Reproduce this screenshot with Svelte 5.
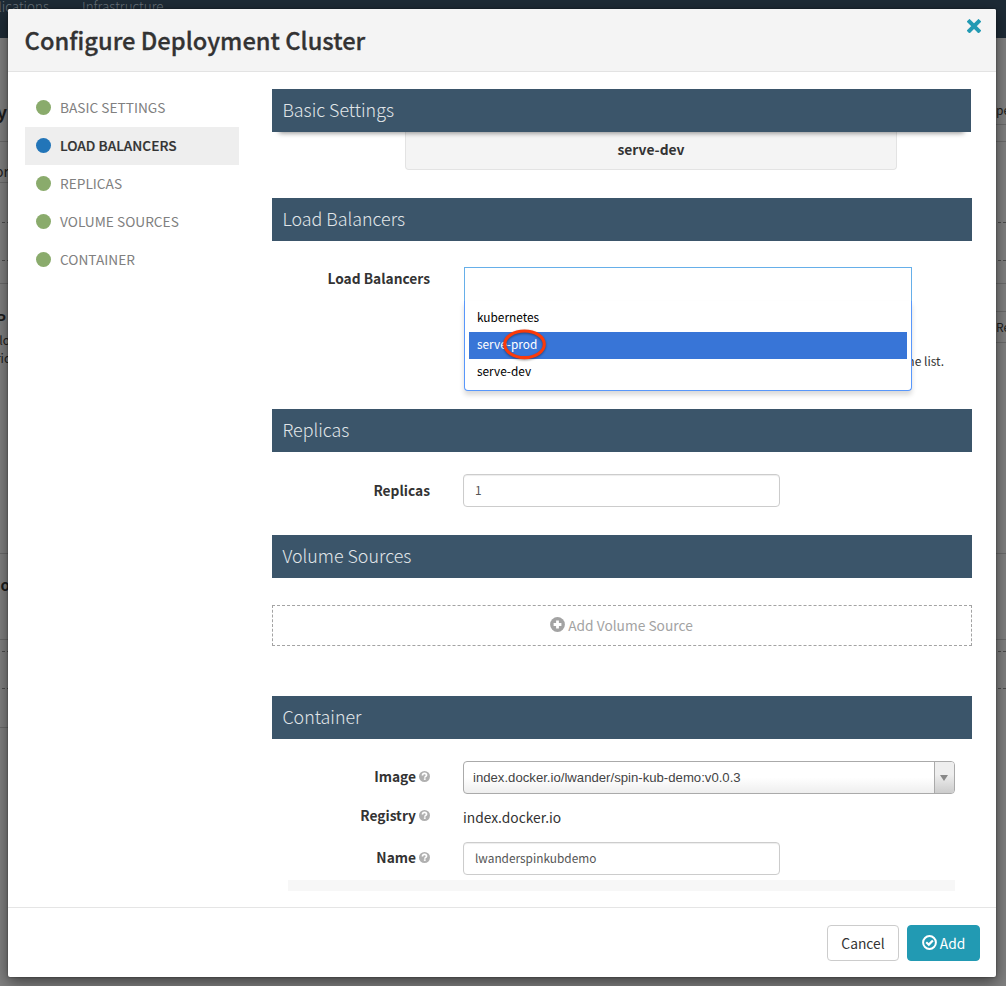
<script>
  const nav = ['Basic Settings', 'Load Balancers', 'Replicas', 'Volume Sources', 'Container'];
  const active = 'Load Balancers';
  const options = ['kubernetes', 'serve-prod', 'serve-dev'];

  // Slices of the dimmed page: height, rule below, text and its look
  const left = [
    { h: 60 }, { h: 44, t: 'y', k: 'big', line: 'solid' }, { h: 41, t: 'or', k: 'mid', line: 'solid' },
    { h: 40, line: 'dashed' }, { h: 38, line: 'dashed' }, { h: 23, line: 'solid' },
    { h: 43, t: 'P', k: 'bold' }, { h: 21, t: 'lo', k: 'small' }, { h: 18, t: 'ric', k: 'small' },
    { h: 188, line: 'solid' }, { h: 86, t: 'o', k: 'bold', line: 'solid' }, { h: 12, line: 'dashed' },
    { h: 37, line: 'dashed' }, { h: 39, line: 'solid' }
  ];
  const right = [
    { h: 60 }, { h: 27, t: 'pe', k: 'cut', line: 'solid' }, { h: 17, line: 'solid' }, { h: 81, line: 'dashed' },
    { h: 38, line: 'dashed' }, { h: 23, line: 'solid' }, { h: 28, line: 'solid' },
    { h: 31, t: 'Re', k: 'small', line: 'solid' }, { h: 211, line: 'solid' }, { h: 86, line: 'solid' },
    { h: 12, line: 'dashed' }, { h: 37, line: 'dashed' }
  ];
</script>

{#snippet help()}
  <svg class="help" viewBox="0 0 14 14" width="11" height="11">
    <circle cx="7" cy="7" r="7" fill="#b0b0b0" />
    <path d="M4.4 5.6C4.4 4 5.4 3 7 3s2.6.9 2.6 2.3c0 1.6-2.2 1.5-2.2 3.2" fill="none" stroke="#fff" stroke-width="2.1" />
    <rect x="6.2" y="9.3" width="2.3" height="2" fill="#fff" />
  </svg>
{/snippet}

<div class="page">
  <div class="topbar"><span>Applications</span><span>Infrastructure</span></div>
  <div class="behind">
    {#each [left, right] as side, i}
      <div class="strip" class:end={i === 1}>
        {#each side as s}
          <div class="slice {s.k ?? ''} {s.line ?? ''}" style="height:{s.h}px">{s.t ?? ''}</div>
        {/each}
      </div>
    {/each}
  </div>

  <div class="modal">
    <header>
      <h1>Configure Deployment Cluster</h1>
      <svg class="close" viewBox="0 0 14 14" width="14" height="14">
        <path d="M2.5 2.7 L11.5 11.7 M11.5 2.7 L2.5 11.7" stroke="#229ab3" stroke-width="4" stroke-linecap="square" stroke-linejoin="round" />
      </svg>
    </header>

    <div class="body">
      <nav>
        {#each nav as item}
          <div class="item" class:active={item === active}><i></i><span>{item}</span></div>
        {/each}
      </nav>

      <main>
        <section class="basic">
          <h2 class="stuck">Basic Settings</h2>
          <div class="well">serve-dev</div>
        </section>

        <section class="lb">
          <h2>Load Balancers</h2>
          <div class="row">
            <div class="label">Load Balancers</div>
            <div class="picker">
              <div class="hint">Refresh the list.</div>
              <div class="menu">
                <div class="search"></div>
                <div class="list">
                  {#each options as o}
                    <div class="option" class:on={o === 'serve-prod'}>{o}</div>
                  {/each}
                </div>
              </div>
              <svg class="mark" width="50" height="38" viewBox="0 0 50 38">
                <ellipse cx="25.5" cy="18.3" rx="19.8" ry="13.3" fill="none" stroke="#fb3a0a" stroke-width="3.1" />
              </svg>
            </div>
          </div>
        </section>

        <section class="replicas">
          <h2>Replicas</h2>
          <div class="row">
            <div class="label">Replicas</div>
            <div class="input">1</div>
          </div>
        </section>

        <section class="volumes">
          <h2>Volume Sources</h2>
          <div class="add">
            <svg viewBox="0 0 15 15" width="15" height="15">
              <circle cx="7.5" cy="7.5" r="7.4" fill="#a3a3a3" />
              <path d="M7.5 3.6v7.8M3.6 7.5h7.8" stroke="#fff" stroke-width="2.8" />
            </svg>
            <span>Add Volume Source</span>
          </div>
        </section>

        <section class="container">
          <h2>Container</h2>
          <div class="row image">
            <div class="label">Image{@render help()}</div>
            <div class="select">
              <span>index.docker.io/lwander/spin-kub-demo:v0.0.3</span>
              <div class="arrow"><b></b></div>
            </div>
          </div>
          <div class="row registry">
            <div class="label">Registry{@render help()}</div>
            <div class="static">index.docker.io</div>
          </div>
          <div class="row name">
            <div class="label">Name{@render help()}</div>
            <div class="input">lwanderspinkubdemo</div>
          </div>
          <div class="bar"></div>
        </section>
      </main>
    </div>

    <footer>
      <div class="btn">Cancel</div>
      <div class="btn primary">
        <svg viewBox="0 0 15 15" width="15" height="15" fill="none" stroke="#fff">
          <circle cx="7.5" cy="7.5" r="6.4" stroke-width="2" />
          <path d="M4.2 7.2 L6.8 9.6 L10.9 5.4" stroke-width="2.2" />
        </svg>
        <span>Add</span>
      </div>
    </footer>
  </div>
</div>

<style>
  :global(body) { margin: 0; overflow: hidden; }
  * { box-sizing: border-box; }
  .page {
    position: relative; width: 1006px; height: 986px; overflow: hidden; background: #808080;
    font-family: "Noto Sans CJK SC", "Open Sans", sans-serif; font-size: 13.8px; color: #333;
  }
  h1, h2 { margin: 0; }
  .topbar {
    height: 38px; background: #1e2b36; color: #68727a; font-weight: 300; font-size: 13.4px; line-height: 13px;
    display: flex; gap: 33px;
  }
  .topbar span:first-child { width: 49px; display: flex; justify-content: flex-end; }
  .behind { display: flex; justify-content: space-between; }
  .strip { width: 10px; overflow: hidden; color: #1c1c1c; }
  .slice { white-space: nowrap; overflow: hidden; display: flex; align-items: flex-end; justify-content: flex-end; padding-right: 3px; border-bottom: 0 solid #6a6a6a; }
  .slice.solid { border-bottom-width: 1px; }
  .slice.dashed { border: 0; background: linear-gradient(to right, transparent 2px, #4c4c4c 2px 5px, transparent 5px 7px, #4c4c4c 7px) bottom / 100% 1px no-repeat; }
  .slice.big { font-size: 18px; font-weight: 700; line-height: 20px; padding-bottom: 20px; }
  .slice.mid { font-size: 14px; line-height: 14px; padding: 0 1px 4px 0; }
  .slice.bold { font-size: 15px; font-weight: 700; line-height: 16px; padding: 0 4px 0 0; }
  .slice.bold.solid { padding: 0 0 46px; }
  .slice.small { font-size: 12px; line-height: 15px; padding: 0 0 1px; }
  .end .slice { justify-content: flex-start; }
  .end .small { padding-bottom: 8px; }
  .end .cut { font-size: 12px; line-height: 14px; padding-bottom: 7px; }

  .modal {
    position: absolute; left: 8px; top: 9px; width: 988px; height: 968px; background: #fff;
    border-radius: 2px; box-shadow: 0 5px 15px rgba(0, 0, 0, .5), 0 0 2px rgba(0, 0, 0, .5); display: flex; flex-direction: column;
  }
  header {
    height: 63px; flex: none; background: #f4f4f4; border-bottom: 1px solid #e3e3e3; border-radius: 2px 2px 0 0;
    display: flex; justify-content: space-between; padding: 0 15px 0 17px;
  }
  h1 { font-size: 23.7px; font-weight: 500; line-height: 62px; -webkit-text-stroke: .3px #333; margin-left: -.4px; }
  .close { margin-top: 10px; }
  .body { flex: 1; display: flex; padding: 17px 24px 0 17px; gap: 33px; min-height: 0; }
  nav { width: 214px; }
  .item { height: 38px; display: flex; align-items: center; gap: 9px; padding: 0 0 1px 11px; line-height: 18px; color: #808080; text-transform: uppercase; }
  .item span { padding-bottom: 1px; font-size: 13.7px; }
  .item i { width: 15px; height: 15px; border-radius: 50%; background: #8aab6c; }
  .item.active { background: #eee; color: #333; font-weight: 500; }
  .item.active span { -webkit-text-stroke: .2px #333; }
  .item.active i { background: #2275b8; }

  main { width: 700px; }
  h2 { height: 43px; background: #3b556a; color: #e1e6e9; font-weight: 300; font-size: 17.85px; line-height: 41px; padding-left: 10.4px; }
  section { display: flex; flex-direction: column; }
  .basic { height: 109px; }
  .stuck { width: 699px; position: relative; box-shadow: 0 8px 5px -7px rgba(0, 0, 0, .45); }
  .well {
    margin-left: 133px; width: 492px; height: 38px; background: #f4f4f4; border: 1px solid #e3e3e3; border-top: 0;
    border-radius: 0 0 4px 4px; text-align: center; font-weight: 700; line-height: 34px;
  }
  .row { display: flex; }
  .label { width: 158px; margin-right: 33px; display: flex; justify-content: flex-end; align-items: center; gap: 3px; font-size: 13.75px; font-weight: 700; height: 24px; line-height: 20px; padding-bottom: 2px; }
  .label svg { margin-top: 1px; }
  .lb { height: 211px; }
  .lb .row { padding-top: 26px; }
  .picker { position: relative; width: 509px; height: 124px; }
  .hint { font-size: 12px; line-height: 16px; padding: 86px 28px 0 0; text-align: right; }
  .menu { position: absolute; left: 1px; top: 0; width: 448px; height: 124px; display: flex; flex-direction: column; }
  .search { height: 34px; background: #fff; border: 1px solid #66afe9; border-bottom: 0; }
  .list { flex: 1; background: #fff; border: 1px solid #5897fb; border-top: 0; border-radius: 0 0 4px 4px; padding: 4px 4px 0; box-shadow: 0 4px 5px rgba(0, 0, 0, .15); }
  .option { height: 27px; line-height: 24px; padding-left: 8px; font-size: 11.85px; color: #000; }
  .option.on { background: #3875d7; color: #fff; }
  .mark { position: absolute; left: 36px; top: 59px; filter: drop-shadow(0 1px 1px rgba(0, 0, 0, .4)); }
  .replicas { height: 126px; }
  .replicas .row { padding-top: 22px; align-items: flex-start; }
  .replicas .label { height: 33px; }
  .input { width: 317px; height: 33px; border: 1px solid #ccc; border-radius: 4px; box-shadow: inset 0 1px 1px rgba(0, 0, 0, .075); padding-left: 11px; font-size: 11.85px; line-height: 30px; color: #555; }
  .volumes { height: 161px; }
  .add { margin-top: 27px; height: 41px; border: 1px dashed #a3a3a3; display: flex; justify-content: center; gap: 3px; color: #a3a3a3; line-height: 39px; font-size: 13.75px; padding-right: 1px; }
  .add svg { margin-top: 11px; }
  .image { padding-top: 22px; }
  .image .label { height: 32px; }
  .select {
    width: 492px; height: 33px; border: 1px solid #aaa; border-radius: 4px; display: flex; justify-content: space-between;
    background: linear-gradient(to top, #eee 0%, #fff 50%); font: 13.17px/31px "Liberation Sans", sans-serif; color: #444; padding-left: 9px; overflow: hidden;
  }
  .arrow { width: 20px; border-left: 1px solid #aaa; background: linear-gradient(to top, #ccc 0%, #eee 60%); display: flex; justify-content: center; align-items: center; }
  .arrow b { border: 4px solid transparent; border-top: 6px solid #888; border-bottom: 0; margin-right: 1px; }
  .registry { margin-top: 10px; height: 38px; }
  .static { line-height: 26px; }
  .name .label { height: 32px; }
  .bar { margin: 5px 0 0 16px; width: 667px; height: 11px; background: #f7f7f7; }
  .container .name { height: 33px; }
  footer { height: 70px; flex: none; border-top: 1px solid #e5e5e5; display: flex; justify-content: flex-end; gap: 8px; padding: 17px 16px 0 0; }
  .btn { width: 72px; height: 36px; border: 1px solid #ccc; border-radius: 4px; text-align: center; line-height: 35px; }
  .primary { width: 73px; background: #229ab3; border-color: #229ab3; color: #fff; display: flex; justify-content: center; gap: 3px; }
  .primary svg { margin-top: 9px; }
</style>
